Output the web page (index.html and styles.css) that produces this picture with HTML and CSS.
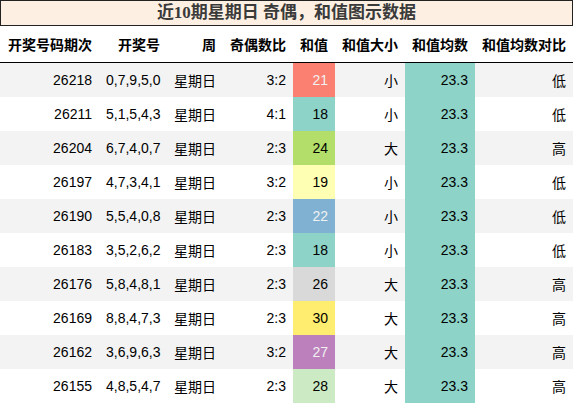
FILE: index.html
```
<!DOCTYPE html>
<html>
    <head>
        <meta charset="utf-8">
        <title>近10期星期日 奇偶，和值图示数据</title>
        <link rel="stylesheet" href="styles.css">
    </head>
    <body>
        <div class="caption">近10期星期日 奇偶，和值图示数据</div>
        <table class="data">
            <thead>
                <tr>
                    <th class="c1">开奖号码期次</th>
                    <th class="c2">开奖号</th>
                    <th class="c3">周</th>
                    <th class="c4">奇偶数比</th>
                    <th class="c5">和值</th>
                    <th class="c6">和值大小</th>
                    <th class="c7">和值均数</th>
                    <th class="c8">和值均数对比</th>
                </tr>
            </thead>
            <tbody>
                <tr>
                    <td>26218</td><td>0,7,9,5,0</td><td>星期日</td><td>3:2</td>
                    <td class="s21">21</td><td>小</td><td class="avg">23.3</td><td>低</td>
                </tr>
                <tr>
                    <td>26211</td><td>5,1,5,4,3</td><td>星期日</td><td>4:1</td>
                    <td class="s18">18</td><td>小</td><td class="avg">23.3</td><td>低</td>
                </tr>
                <tr>
                    <td>26204</td><td>6,7,4,0,7</td><td>星期日</td><td>2:3</td>
                    <td class="s24">24</td><td>大</td><td class="avg">23.3</td><td>高</td>
                </tr>
                <tr>
                    <td>26197</td><td>4,7,3,4,1</td><td>星期日</td><td>3:2</td>
                    <td class="s19">19</td><td>小</td><td class="avg">23.3</td><td>低</td>
                </tr>
                <tr>
                    <td>26190</td><td>5,5,4,0,8</td><td>星期日</td><td>2:3</td>
                    <td class="s22">22</td><td>小</td><td class="avg">23.3</td><td>低</td>
                </tr>
                <tr>
                    <td>26183</td><td>3,5,2,6,2</td><td>星期日</td><td>2:3</td>
                    <td class="s18">18</td><td>小</td><td class="avg">23.3</td><td>低</td>
                </tr>
                <tr>
                    <td>26176</td><td>5,8,4,8,1</td><td>星期日</td><td>2:3</td>
                    <td class="s26">26</td><td>大</td><td class="avg">23.3</td><td>高</td>
                </tr>
                <tr>
                    <td>26169</td><td>8,8,4,7,3</td><td>星期日</td><td>2:3</td>
                    <td class="s30">30</td><td>大</td><td class="avg">23.3</td><td>高</td>
                </tr>
                <tr>
                    <td>26162</td><td>3,6,9,6,3</td><td>星期日</td><td>3:2</td>
                    <td class="s27">27</td><td>大</td><td class="avg">23.3</td><td>高</td>
                </tr>
                <tr>
                    <td>26155</td><td>4,8,5,4,7</td><td>星期日</td><td>2:3</td>
                    <td class="s28">28</td><td>大</td><td class="avg">23.3</td><td>高</td>
                </tr>
            </tbody>
        </table>
    </body>
</html>
```

FILE: styles.css
```
* {margin: 0px;padding: 0px;}
body {font-family: "Liberation Sans", "Noto Sans CJK SC", sans-serif;font-size: 14px;color: #000;}
.caption {width: 571px;height: 24px;line-height: 24px;border: 1px solid #222;background-color: #fdf0e3;color: #3a3a3a;font-family: "Liberation Serif", "Noto Sans CJK SC", serif;font-size: 17px;font-weight: bold;text-align: center;}
.data {width: 573px;border-collapse: collapse;table-layout: fixed;}
.data th {height: 36px;padding: 0 7px;text-align: right;font-weight: bold;border-bottom: 1px solid #000;white-space: nowrap;}
.data td {height: 34px;padding: 0 7px;text-align: right;white-space: nowrap;}
.data tbody tr:nth-child(odd) {background-color: #f3f3f3;}
.c1 {width: 85px;}
.c2 {width: 54px;}
.c3 {width: 42px;}
.c4 {width: 56px;}
.c5 {width: 28px;}
.c6 {width: 56px;}
.c7 {width: 56px;}
.c8 {width: 84px;}
.avg {background-color: #8dd3c7;}
.s18 {background-color: #8dd3c7;}
.s19 {background-color: #ffffb3;}
.s21 {background-color: #fb8072;color: #f1f1f1;}
.s22 {background-color: #80b1d3;color: #f1f1f1;}
.s24 {background-color: #b3de69;}
.s26 {background-color: #d9d9d9;}
.s27 {background-color: #bc80bd;color: #f1f1f1;}
.s28 {background-color: #ccebc5;}
.s30 {background-color: #ffed6f;}
```
